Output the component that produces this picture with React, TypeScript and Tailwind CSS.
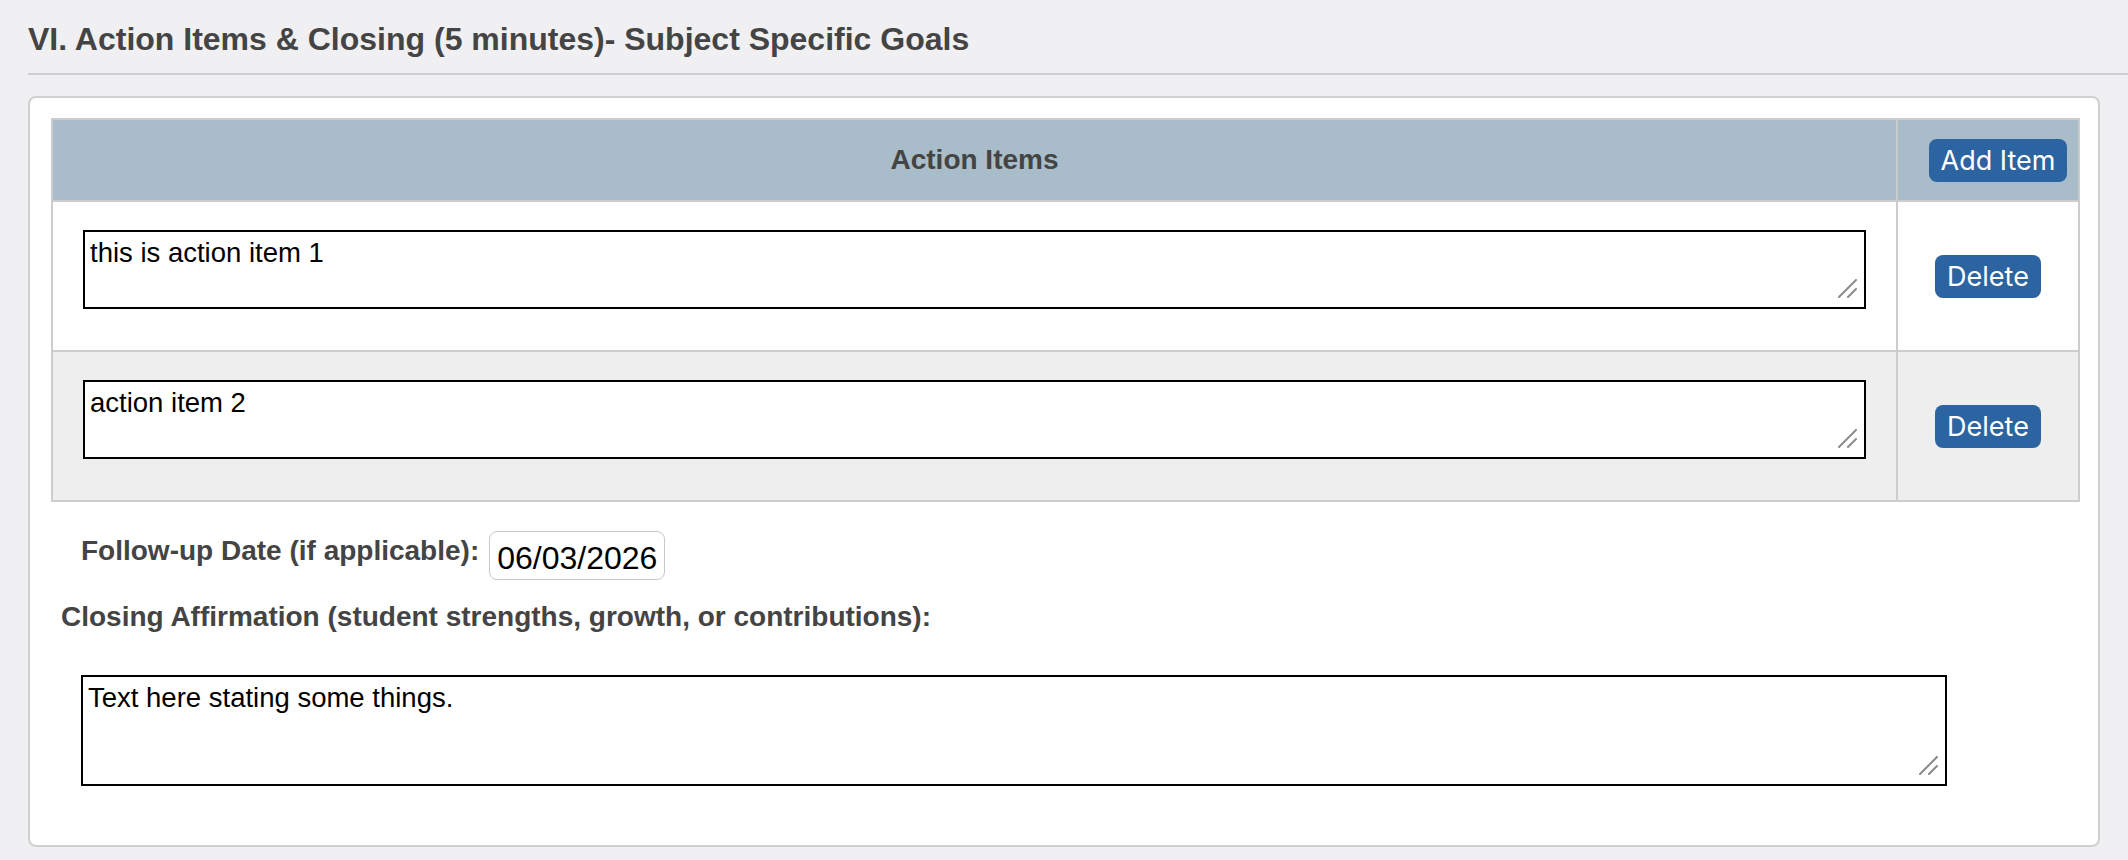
import { useState } from 'react'

type Item = { id: number; text: string }

const initialItems: Item[] = [
  { id: 1, text: 'this is action item 1' },
  { id: 2, text: 'action item 2' },
]

// resize grip drawn like the Safari one (two diagonal strokes)
function Grip() {
  return (
    <svg
      className="pointer-events-none absolute right-[9px] bottom-[11px] h-[19px] w-[19px]"
      viewBox="0 0 19 19"
      fill="none"
      stroke="#8a8a8a"
      strokeWidth="2"
      strokeLinecap="round"
    >
      <line x1="1" y1="18" x2="18" y2="1" />
      <line x1="10" y1="18" x2="18" y2="10" />
    </svg>
  )
}

export default function App() {
  const [items, setItems] = useState<Item[]>(initialItems)

  const addItem = () => setItems(prev => [...prev, { id: Date.now(), text: '' }])
  const removeItem = (id: number) => setItems(prev => prev.filter(i => i.id !== id))

  return (
    <div className="min-h-[860px] bg-[#f0f0f2] font-['Liberation_Sans',Arial,sans-serif] pt-[21px]">
      {/* ── SECTION TITLE ─────────────────────────────── */}
      <h3 className="ml-[28px] text-[32px] leading-[37px] font-bold text-[#444]">
        VI. Action Items &amp; Closing (5 minutes)- Subject Specific Goals
      </h3>
      <div className="ml-[28px] mt-[15px] h-[2px] bg-[#cfcfd1]" />

      {/* ── CARD ──────────────────────────────────────── */}
      <div className="mx-[28px] mt-[21px] rounded-[8px] border-2 border-[#d0d0d0] bg-white pt-[20px] pl-[21px] pr-[18px] pb-[59px]">
        <table className="w-full table-fixed border-collapse border-2 border-[#cccccc]">
          <colgroup>
            <col />
            <col className="w-[182px]" />
          </colgroup>
          <thead>
            <tr className="h-[82px] bg-[#a8bdc9]">
              <th className="border-2 border-[#cccccc] text-center align-middle text-[28px] font-bold text-[#444]">
                Action Items
              </th>
              <th className="border-2 border-[#cccccc] pl-[31px] text-left align-middle">
                <button
                  onClick={addItem}
                  className="h-[43px] w-[138px] rounded-[8px] bg-[#2b64a0] font-['Inter',sans-serif] text-[27px] font-normal leading-none text-white"
                >
                  Add Item
                </button>
              </th>
            </tr>
          </thead>
          <tbody>
            {items.map((item, idx) => (
              <tr key={item.id} className={`h-[150px] ${idx % 2 === 1 ? 'bg-[#eeeeee]' : 'bg-white'}`}>
                <td className="border-2 border-[#cccccc] px-[30px] pt-[28px] align-top">
                  <div className="relative">
                    <textarea
                      defaultValue={item.text}
                      className="block h-[79px] w-full resize-none border-2 border-black bg-white p-[5px] text-[27.5px] leading-[31px] text-black outline-none"
                    />
                    <Grip />
                  </div>
                </td>
                <td className="border-2 border-[#cccccc] text-center align-middle">
                  <button
                    onClick={() => removeItem(item.id)}
                    className="h-[43px] w-[106px] rounded-[8px] bg-[#2b64a0] font-['Inter',sans-serif] text-[27px] leading-none text-white"
                  >
                    Delete
                  </button>
                </td>
              </tr>
            ))}
          </tbody>
        </table>

        {/* ── FOLLOW-UP DATE ─────────────────────────── */}
        <div className="mt-[29px] ml-[30px] flex items-start">
          <label className="mt-[4px] text-[28px] leading-[32px] font-bold text-[#444]">
            Follow-up Date (if applicable):
          </label>
          <div className="ml-[10px] flex h-[49px] w-[176px] items-center rounded-[8px] border-[1.5px] border-[#c8c8c8] bg-white pl-[7px] pt-[4px] text-[32px] leading-[36px] text-black">
            06/03/2026
          </div>
        </div>

        {/* ── CLOSING AFFIRMATION ────────────────────── */}
        <p className="mt-[21px] ml-[10px] text-[28px] leading-[32px] font-bold text-[#444]">
          Closing Affirmation (student strengths, growth, or contributions):
        </p>
        <div className="relative mt-[42px] ml-[30px] w-[1866px]">
          <textarea
            defaultValue="Text here stating some things."
            className="block h-[111px] w-full resize-none border-2 border-black bg-white p-[5px] text-[27.5px] leading-[31px] text-black outline-none"
          />
          <Grip />
        </div>
      </div>
    </div>
  )
}
